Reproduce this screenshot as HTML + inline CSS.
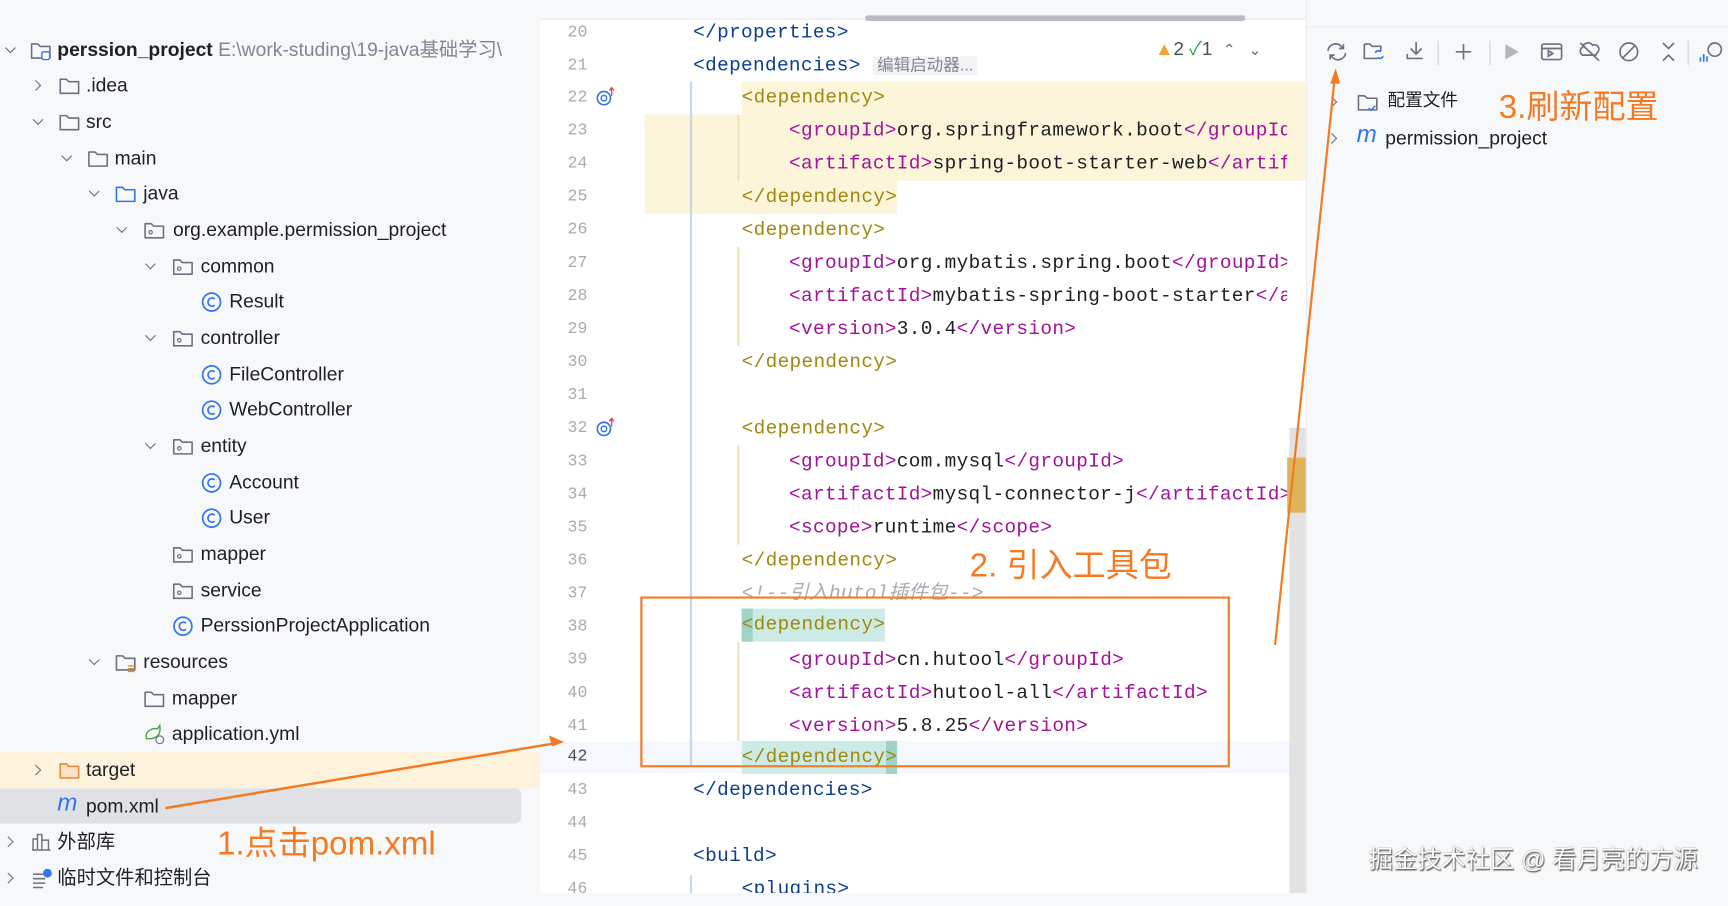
<!DOCTYPE html>
<html><head><meta charset="utf-8"><style>
*{margin:0;padding:0;box-sizing:border-box}
html,body{width:1728px;height:893px;overflow:hidden;background:#f7f8fa}
#w{position:absolute;left:0;top:0;width:1568px;height:810px;transform:scale(1.10204,1.1025);transform-origin:0 0;font-family:"Liberation Sans","Noto Sans CJK SC",sans-serif;color:#1e1f22}
.a{position:absolute}
.r{position:absolute;height:26px;line-height:26px;font-size:17.5px;white-space:nowrap}
.r svg{position:absolute;top:4px}
.ch{position:absolute;top:8px;width:7px;height:7px;border-right:1.4px solid #6c707e;border-bottom:1.4px solid #6c707e;transform:rotate(45deg)}
.ch.rt{top:10px;transform:rotate(-45deg)}
.ln{position:absolute;left:500px;width:33px;text-align:right;font-family:"Liberation Mono",monospace;font-size:15px;color:#a8abb3;height:30px;line-height:30px}
.c{position:absolute;font-family:"Liberation Mono",monospace;font-size:17.6px;height:30px;line-height:30px;white-space:pre;letter-spacing:0.3px}
.t{color:#9e880d}.m{color:#a2129a}.b{color:#0b3d91}.x{color:#1e1f22}
.ann{position:absolute;color:#f47a22;font-size:30px;font-family:"Liberation Sans","Noto Sans CJK SC",sans-serif;white-space:nowrap}
</style></head><body><div id="w">
<div class="a" style="left:0;top:0;width:490px;height:810px;background:#f7f8fa"></div>
<div class="a" style="left:0;top:682px;width:490px;height:33px;background:#fdf3dc"></div>
<div class="a" style="left:0;top:715px;width:473px;height:32px;background:#dfe1e5;border-radius:0 6px 6px 0"></div>

<svg width="0" height="0" style="position:absolute"><defs>
<symbol id="fd" viewBox="0 0 18 18"><path d="M1.5 3.5h5l2 2h8v9.5h-15z" fill="none" stroke="#6c707e" stroke-width="1.3" stroke-linejoin="round"/></symbol>
<symbol id="fb" viewBox="0 0 18 18"><path d="M1.5 3.5h5l2 2h8v9.5h-15z" fill="none" stroke="#3574f0" stroke-width="1.3" stroke-linejoin="round"/></symbol>
<symbol id="fo" viewBox="0 0 18 18"><path d="M1.5 3.5h5l2 2h8v9.5h-15z" fill="#fbe3c8" stroke="#e08a3c" stroke-width="1.3" stroke-linejoin="round"/></symbol>
<symbol id="fp" viewBox="0 0 18 18"><path d="M1.5 3.5h5l2 2h8v9.5h-15z" fill="none" stroke="#6c707e" stroke-width="1.3" stroke-linejoin="round"/><circle cx="6" cy="10.5" r="1.4" fill="none" stroke="#6c707e"/></symbol>
<symbol id="cc" viewBox="0 0 18 18"><circle cx="9" cy="9" r="7.3" fill="none" stroke="#3574f0" stroke-width="1.4"/><path d="M11.5 6.5a3.3 3.3 0 1 0 0 5" fill="none" stroke="#3574f0" stroke-width="1.4"/></symbol>
</defs></svg>

<div class="r" style="left:0;top:32px;font-weight:bold"><span class="ch" style="left:6px"></span><svg style="left:27px" width="20" height="20"><use href="#fd"/><rect x="11" y="11" width="7" height="7" rx="1.5" fill="#fff" stroke="#3574f0" stroke-width="1.3"/></svg><span style="position:absolute;left:52px">perssion_project <span style="font-weight:normal;color:#818594">E:\work-studing\19-java基础学习\</span></span></div>
<div class="r" style="left:0;top:64px"><span class="ch rt" style="left:29px"></span><svg style="left:53px" width="20" height="20"><use href="#fd"/></svg><span style="position:absolute;left:78px">.idea</span></div>
<div class="r" style="left:0;top:97px"><span class="ch" style="left:31px"></span><svg style="left:53px" width="20" height="20"><use href="#fd"/></svg><span style="position:absolute;left:78px">src</span></div>
<div class="r" style="left:0;top:130px"><span class="ch" style="left:57px"></span><svg style="left:79px" width="20" height="20"><use href="#fd"/></svg><span style="position:absolute;left:104px">main</span></div>
<div class="r" style="left:0;top:162px"><span class="ch" style="left:82px"></span><svg style="left:104px" width="20" height="20"><use href="#fb"/></svg><span style="position:absolute;left:130px">java</span></div>
<div class="r" style="left:0;top:195px"><span class="ch" style="left:107px"></span><svg style="left:130px" width="20" height="20"><use href="#fp"/></svg><span style="position:absolute;left:157px">org.example.permission_project</span></div>
<div class="r" style="left:0;top:228px"><span class="ch" style="left:133px"></span><svg style="left:156px" width="20" height="20"><use href="#fp"/></svg><span style="position:absolute;left:182px">common</span></div>
<div class="r" style="left:0;top:260px"><svg style="left:182px" width="20" height="20"><use href="#cc"/></svg><span style="position:absolute;left:208px">Result</span></div>
<div class="r" style="left:0;top:293px"><span class="ch" style="left:133px"></span><svg style="left:156px" width="20" height="20"><use href="#fp"/></svg><span style="position:absolute;left:182px">controller</span></div>
<div class="r" style="left:0;top:326px"><svg style="left:182px" width="20" height="20"><use href="#cc"/></svg><span style="position:absolute;left:208px">FileController</span></div>
<div class="r" style="left:0;top:358px"><svg style="left:182px" width="20" height="20"><use href="#cc"/></svg><span style="position:absolute;left:208px">WebController</span></div>
<div class="r" style="left:0;top:391px"><span class="ch" style="left:133px"></span><svg style="left:156px" width="20" height="20"><use href="#fp"/></svg><span style="position:absolute;left:182px">entity</span></div>
<div class="r" style="left:0;top:424px"><svg style="left:182px" width="20" height="20"><use href="#cc"/></svg><span style="position:absolute;left:208px">Account</span></div>
<div class="r" style="left:0;top:456px"><svg style="left:182px" width="20" height="20"><use href="#cc"/></svg><span style="position:absolute;left:208px">User</span></div>
<div class="r" style="left:0;top:489px"><svg style="left:156px" width="20" height="20"><use href="#fp"/></svg><span style="position:absolute;left:182px">mapper</span></div>
<div class="r" style="left:0;top:522px"><svg style="left:156px" width="20" height="20"><use href="#fp"/></svg><span style="position:absolute;left:182px">service</span></div>
<div class="r" style="left:0;top:554px"><svg style="left:156px" width="20" height="20"><use href="#cc"/></svg><span style="position:absolute;left:182px">PerssionProjectApplication</span></div>
<div class="r" style="left:0;top:587px"><span class="ch" style="left:82px"></span><svg style="left:104px" width="20" height="20"><use href="#fd"/><path d="M12 13h6M12 15.5h6M12 18h6" stroke="#e08a3c" stroke-width="1.3"/></svg><span style="position:absolute;left:130px">resources</span></div>
<div class="r" style="left:0;top:620px"><svg style="left:130px" width="20" height="20"><use href="#fd"/></svg><span style="position:absolute;left:156px">mapper</span></div>
<div class="r" style="left:0;top:652px"><svg style="left:130px" width="20" height="20"><path d="M3 14c-2-5 3-10 10-9l2-3c1 6-1 12-9 12z" fill="none" stroke="#4a9e4a" stroke-width="1.3"/><circle cx="15" cy="15" r="3.5" fill="#fff" stroke="#6c707e" stroke-width="1.1"/></svg><span style="position:absolute;left:156px">application.yml</span></div>
<div class="r" style="left:0;top:685px"><span class="ch rt" style="left:29px"></span><svg style="left:53px" width="20" height="20"><use href="#fo"/></svg><span style="position:absolute;left:78px">target</span></div>
<div class="r" style="left:0;top:718px"><span style="position:absolute;left:52px;color:#3574f0;font-style:italic;font-size:22px;top:-3px">m</span><span style="position:absolute;left:78px">pom.xml</span></div>
<div class="r" style="left:0;top:750px"><span class="ch rt" style="left:4px"></span><svg style="left:28px" width="20" height="20"><path d="M2 17V7h4v10M6 17V3h4v14M10 17V8h6v9zM1 17h17" fill="none" stroke="#6c707e" stroke-width="1.3"/></svg><span style="position:absolute;left:52px">外部库</span></div>
<div class="r" style="left:0;top:783px"><span class="ch rt" style="left:4px"></span><svg style="left:28px" width="20" height="20"><path d="M2 6h9M2 10h11M2 14h11M2 18h9" stroke="#6c707e" stroke-width="1.4"/><circle cx="15" cy="5" r="4" fill="#3574f0"/></svg><span style="position:absolute;left:52px">临时文件和控制台</span></div>

<div class="a" style="left:490px;top:0;width:695px;height:810px;background:#fff;overflow:hidden">
 <div class="a" style="left:0;top:0;width:695px;height:18px;background:#f7f8fa;border-bottom:1px solid #ebecf0"></div>
 <div class="a" style="left:295px;top:14px;width:345px;height:5px;border-radius:3px;background:#b9bbc1"></div>
 <div class="a" style="left:0;top:672px;width:680px;height:30px;background:#f5f8fe"></div>
 <div class="a" style="left:183px;top:74px;width:512px;height:30px;background:#fdf5da"></div>
 <div class="a" style="left:95px;top:104px;width:600px;height:60px;background:#fdf5da"></div>
 <div class="a" style="left:95px;top:164px;width:229px;height:30px;background:#fdf5da"></div>
 <div class="a" style="left:183px;top:552px;width:130px;height:30px;background:#cdebe6"></div>
 <div class="a" style="left:183px;top:552px;width:10px;height:30px;background:#9fd3c6"></div>
 <div class="a" style="left:183px;top:672px;width:141px;height:30px;background:#cdebe6"></div>
 <div class="a" style="left:314px;top:672px;width:10px;height:30px;background:#9fd3c6"></div>
 <div class="a" style="left:136px;top:74px;width:2px;height:620px;background:#c7d6ea"></div>
 <div class="a" style="left:179px;top:104px;width:1.5px;height:60px;background:#ede3bd"></div>
 <div class="a" style="left:179px;top:224px;width:1.5px;height:90px;background:#ede3bd"></div>
 <div class="a" style="left:179px;top:404px;width:1.5px;height:90px;background:#ede3bd"></div>
 <div class="a" style="left:179px;top:582px;width:1.5px;height:90px;background:#ede3bd"></div>
 <div class="a" style="left:136px;top:794px;width:2px;height:16px;background:#c7d6ea"></div>
 <div class="a" style="left:680px;top:388px;width:15px;height:422px;background:#e2e2e2"></div>
 <div class="a" style="left:678px;top:415px;width:17px;height:50px;background:#deb35a"></div>
</div>
<div class="ln" style="top:15px">20</div><div class="ln" style="top:45px">21</div><div class="ln" style="top:74px">22</div><div class="ln" style="top:104px">23</div><div class="ln" style="top:134px">24</div><div class="ln" style="top:164px">25</div><div class="ln" style="top:194px">26</div><div class="ln" style="top:224px">27</div><div class="ln" style="top:254px">28</div><div class="ln" style="top:284px">29</div><div class="ln" style="top:314px">30</div><div class="ln" style="top:344px">31</div><div class="ln" style="top:374px">32</div><div class="ln" style="top:404px">33</div><div class="ln" style="top:434px">34</div><div class="ln" style="top:464px">35</div><div class="ln" style="top:494px">36</div><div class="ln" style="top:524px">37</div><div class="ln" style="top:554px">38</div><div class="ln" style="top:584px">39</div><div class="ln" style="top:614px">40</div><div class="ln" style="top:644px">41</div><div class="ln" style="top:672px;color:#4a4d55">42</div><div class="ln" style="top:702px">43</div><div class="ln" style="top:732px">44</div><div class="ln" style="top:762px">45</div><div class="ln" style="top:792px">46</div>
<svg class="a" style="left:540px;top:78px" width="20" height="20"><circle cx="8" cy="11" r="6" fill="none" stroke="#3574f0" stroke-width="1.5"/><circle cx="8" cy="11" r="2.5" fill="none" stroke="#3574f0" stroke-width="1.3"/><path d="M15 9V2M13 4l2-2.5 2 2.5" fill="none" stroke="#e5484d" stroke-width="1.3"/></svg>
<svg class="a" style="left:540px;top:378px" width="20" height="20"><circle cx="8" cy="11" r="6" fill="none" stroke="#3574f0" stroke-width="1.5"/><circle cx="8" cy="11" r="2.5" fill="none" stroke="#3574f0" stroke-width="1.3"/><path d="M15 9V2M13 4l2-2.5 2 2.5" fill="none" stroke="#e5484d" stroke-width="1.3"/></svg>

<div class="a" style="left:490px;top:0;width:678px;height:810px;overflow:hidden">
<div class="c" style="left:139px;top:15px"><span class="b">&lt;/properties&gt;</span></div>
<div class="c" style="left:139px;top:45px"><span class="b">&lt;dependencies&gt;</span> <span style="background:#f2f3f5;color:#818594;font-family:'Liberation Sans','Noto Sans CJK SC',sans-serif;font-size:15px;padding:0 4px;letter-spacing:0">编辑启动器...</span></div>
<div class="c" style="left:183px;top:74px"><span class="t">&lt;dependency&gt;</span></div>
<div class="c" style="left:226px;top:104px"><span class="m">&lt;groupId&gt;</span>org.springframework.boot<span class="m">&lt;/groupId&gt;</span></div>
<div class="c" style="left:226px;top:134px"><span class="m">&lt;artifactId&gt;</span>spring-boot-starter-web<span class="m">&lt;/artifactId&gt;</span></div>
<div class="c" style="left:183px;top:164px"><span class="t">&lt;/dependency&gt;</span></div>
<div class="c" style="left:183px;top:194px"><span class="t">&lt;dependency&gt;</span></div>
<div class="c" style="left:226px;top:224px"><span class="m">&lt;groupId&gt;</span>org.mybatis.spring.boot<span class="m">&lt;/groupId&gt;</span></div>
<div class="c" style="left:226px;top:254px"><span class="m">&lt;artifactId&gt;</span>mybatis-spring-boot-starter<span class="m">&lt;/artifactId&gt;</span></div>
<div class="c" style="left:226px;top:284px"><span class="m">&lt;version&gt;</span>3.0.4<span class="m">&lt;/version&gt;</span></div>
<div class="c" style="left:183px;top:314px"><span class="t">&lt;/dependency&gt;</span></div>
<div class="c" style="left:183px;top:374px"><span class="t">&lt;dependency&gt;</span></div>
<div class="c" style="left:226px;top:404px"><span class="m">&lt;groupId&gt;</span>com.mysql<span class="m">&lt;/groupId&gt;</span></div>
<div class="c" style="left:226px;top:434px"><span class="m">&lt;artifactId&gt;</span>mysql-connector-j<span class="m">&lt;/artifactId&gt;</span></div>
<div class="c" style="left:226px;top:464px"><span class="m">&lt;scope&gt;</span>runtime<span class="m">&lt;/scope&gt;</span></div>
<div class="c" style="left:183px;top:494px"><span class="t">&lt;/dependency&gt;</span></div>
<div class="c" style="left:183px;top:524px;color:#a8abb3;font-style:italic">&lt;!--引入hutol插件包--&gt;</div>
<div class="c" style="left:183px;top:552px"><span class="t">&lt;dependency&gt;</span></div>
<div class="c" style="left:226px;top:584px"><span class="m">&lt;groupId&gt;</span>cn.hutool<span class="m">&lt;/groupId&gt;</span></div>
<div class="c" style="left:226px;top:614px"><span class="m">&lt;artifactId&gt;</span>hutool-all<span class="m">&lt;/artifactId&gt;</span></div>
<div class="c" style="left:226px;top:644px"><span class="m">&lt;version&gt;</span>5.8.25<span class="m">&lt;/version&gt;</span></div>
<div class="c" style="left:183px;top:672px"><span class="t">&lt;/dependency&gt;</span></div>
<div class="c" style="left:139px;top:702px"><span class="b">&lt;/dependencies&gt;</span></div>
<div class="c" style="left:139px;top:762px"><span class="b">&lt;build&gt;</span></div>
<div class="c" style="left:183px;top:792px"><span class="b">&lt;plugins&gt;</span></div>
</div>
<div class="a" style="left:1048px;top:30px;font-size:17px;color:#4a4d55;white-space:nowrap"><span style="color:#f0a732">&#9650;</span>2 <span style="color:#3ea04e">&#10003;</span>1 &nbsp;<span style="color:#6c707e;font-size:14px">&#8963; &nbsp; &#8964;</span></div>

<div class="a" style="left:1185px;top:0;width:383px;height:810px;background:#f7f8fa;border-left:1px solid #ebecf0"></div>
<div class="a" style="left:1185px;top:24px;width:383px;height:1px;background:#ebecf0"></div>
<svg class="a" style="left:1200px;top:34px" width="368" height="26" fill="none" stroke="#6c707e" stroke-width="1.5">
 <path d="M5 12a7 7 0 0 1 12-4l2 2M21 14a7 7 0 0 1-12 4l-2-2M19 6v4h-4M7 20v-4h4"/>
 <path d="M38 6h5l2 2h8v4M50 19H38V6"/><path d="M48 14a3 3 0 0 1 5-1M55 17a3 3 0 0 1-5 1" stroke="#3574f0"/>
 <path d="M85 4v11M80 10l5 5 5-5M77 15v4h14"/>
 <path d="M105 3v22" stroke="#dcdde2"/>
 <path d="M128 6v14M121 13h14"/>
 <path d="M152 3v22" stroke="#dcdde2"/>
 <path d="M166 6l12 7-12 7z" fill="#b3b5bb" stroke="none"/>
 <rect x="199" y="6" width="18" height="14" rx="2"/><path d="M199 10h18M205 12v5l4-2.5z"/>
 <path d="M236 9a5 5 0 0 1 9-2 4 4 0 0 1 5 6l-2 3h-12a4 4 0 0 1 0-7zM234 5l17 16"/>
 <circle cx="278" cy="13" r="8"/><path d="M272 19l12-12"/>
 <path d="M309 5l5 5 5-5M309 21l5-5 5 5"/>
 <path d="M332 3v22" stroke="#dcdde2"/>
 <circle cx="356" cy="11" r="6"/><path d="M343 22v-4M346 22v-7M349 22v-5" stroke="#3574f0"/>
</svg>
<div class="r" style="left:1185px;top:79px;font-size:16px"><span class="ch rt" style="left:20px"></span><svg style="left:46px" width="20" height="20"><use href="#fd"/><path d="M11 15l2 2 4-4" stroke="#3574f0" stroke-width="1.4" fill="none"/></svg><span style="position:absolute;left:74px">配置文件</span></div>
<div class="r" style="left:1185px;top:112px"><span class="ch rt" style="left:20px"></span><span style="position:absolute;left:46px;color:#3574f0;font-style:italic;font-size:22px;top:-3px">m</span><span style="position:absolute;left:72px">permission_project</span></div>

<div class="a" style="left:581px;top:541px;width:535px;height:155px;border:2px solid #f07f2a"></div>
<svg class="a" style="left:0;top:0" width="1568" height="810">
 <path d="M150 733L505 674" stroke="#f47a22" stroke-width="2.2"/><path d="M512 673l-14-6 3 10z" fill="#f47a22"/>
 <path d="M1157 585L1211 72" stroke="#f47a22" stroke-width="2"/><path d="M1212 62l-5 14h9z" fill="#f47a22"/>
</svg>
<div class="ann" style="left:197px;top:740px">1.点击pom.xml</div>
<div class="ann" style="left:880px;top:488px">2. 引入工具包</div>
<div class="ann" style="left:1360px;top:72px">3.刷新配置</div>
<div class="a" style="left:1242px;top:762px;font-size:22px;color:#fff;text-shadow:0 0 1px #555,1px 1px 1px #666;white-space:nowrap">掘金技术社区 @ 看月亮的方源</div>
</div></body></html>
